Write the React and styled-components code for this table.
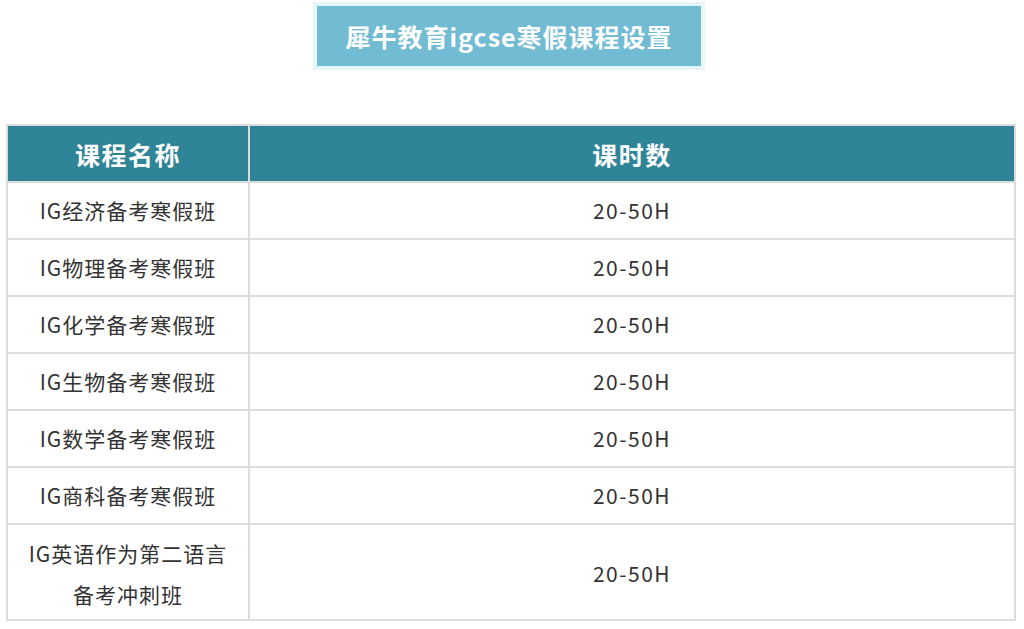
import React from 'react'
import styled, {createGlobalStyle} from 'styled-components'

const GlobalStyle = createGlobalStyle`
  html, body {
    margin: 0;
    padding: 0;
    background: #ffffff;
  }
  body {
    font-family: "Noto Sans CJK SC", "Noto Sans", sans-serif;
    color: #333333;
  }
`

const Page = styled.div`
  width: 1024px;
  height: 629px;
  overflow: hidden;
  padding: 2px 8px 0 6px;
  box-sizing: border-box;
  display: flex;
  flex-direction: column;
  align-items: center;
`

const TitleFrame = styled.div`
  padding: 4px;
  background: #e7f7fc;
  margin-left: -4px;
`

const Title = styled.h1`
  margin: 0;
  width: 384px;
  height: 60px;
  background: #71bbd3;
  color: #ffffff;
  font-size: 25px;
  font-weight: 700;
  display: flex;
  align-items: center;
  justify-content: center;
  letter-spacing: 1px;
`

const Table = styled.table`
  margin-top: 54px;
  width: 1010px;
  border-collapse: collapse;
  border: 2px solid #dcdcdc;
  table-layout: fixed;
`

const HeadCell = styled.th`
  background: #2f8498;
  color: #ffffff;
  font-size: 25px;
  font-weight: 700;
  letter-spacing: 1.5px;
  height: 55px;
  padding: 0;
  border: 2px solid #dcdcdc;
  border-top: none;
  text-align: center;
  width: ${p => p.$width || 'auto'};
`

const Cell = styled.td`
  height: ${p => (p.$tall ? '91px' : '55px')};
  padding: ${p => (p.$tall ? '3px 0 0' : '0')};
  border: 2px solid #dcdcdc;
  text-align: center;
  font-size: 21px;
  letter-spacing: 1px;
  line-height: ${p => (p.$tall ? '41px' : '1.2')};
  color: #333333;
`

const Hours = styled.span`
  letter-spacing: 1.5px;
`

const courses = [
    'IG经济备考寒假班',
    'IG物理备考寒假班',
    'IG化学备考寒假班',
    'IG生物备考寒假班',
    'IG数学备考寒假班',
    'IG商科备考寒假班',
]

const App = () => {
    return (
        <Page>
            <GlobalStyle/>
            <TitleFrame>
                <Title>犀牛教育igcse寒假课程设置</Title>
            </TitleFrame>
            <Table>
                <thead>
                <tr>
                    <HeadCell $width="240px">课程名称</HeadCell>
                    <HeadCell>课时数</HeadCell>
                </tr>
                </thead>
                <tbody>
                {courses.map(name => (
                    <tr key={name}>
                        <Cell>{name}</Cell>
                        <Cell><Hours>20-50H</Hours></Cell>
                    </tr>
                ))}
                <tr>
                    <Cell $tall>IG英语作为第二语言<br/>备考冲刺班</Cell>
                    <Cell $tall><Hours>20-50H</Hours></Cell>
                </tr>
                </tbody>
            </Table>
        </Page>
    )
}

export default App
